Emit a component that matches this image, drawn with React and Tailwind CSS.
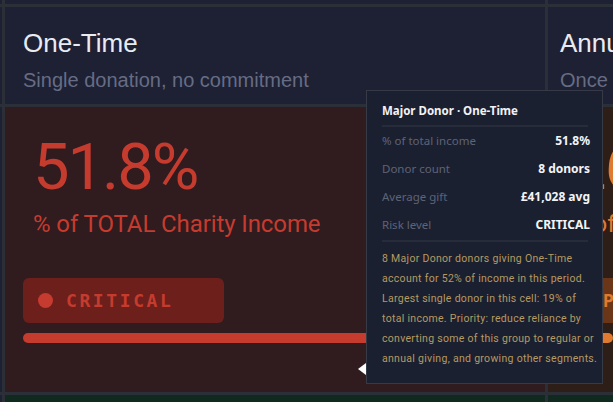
export default function App() {
    const rows = [
        { label: '% of total income', value: '51.8%' },
        { label: 'Donor count', value: '8 donors' },
        { label: 'Average gift', value: '£41,028 avg' },
        { label: 'Risk level', value: 'CRITICAL' },
    ];

    const note = [
        '8 Major Donor donors giving One-Time',
        'account for 52% of income in this period.',
        'Largest single donor in this cell: 19% of',
        'total income. Priority: reduce reliance by',
        'converting some of this group to regular or',
        'annual giving, and growing other segments.',
    ];

    return (
        <div className="relative w-[613px] h-[402px] overflow-hidden bg-[#2b2f38]">
            <div className="grid grid-cols-[2px_540px_1fr] grid-rows-[4px_97px_285px_1fr] gap-[3px] h-full">
                {/* row above (clipped) */}
                <div className="bg-[#1d2133]" />
                <div className="bg-[#1d2133]" />
                <div className="bg-[#1d2133]" />

                {/* header row */}
                <div className="bg-[#1d2133]" />
                <div className="bg-[#1d2133] px-[18px] pt-[21px] overflow-hidden whitespace-nowrap" style={{ fontFamily: '"Liberation Sans", Arial, sans-serif' }}>
                    <h3 className="text-[26px] leading-[30px] text-[#e9ebf1]">One-Time</h3>
                    <p className="text-[20px] leading-[24px] mt-[10px] text-[#676c85]">Single donation, no commitment</p>
                </div>
                <div className="bg-[#1d2133] pl-[12px] pt-[21px] overflow-hidden whitespace-nowrap" style={{ fontFamily: '"Liberation Sans", Arial, sans-serif' }}>
                    <h3 className="text-[26px] leading-[30px] text-[#e9ebf1]">Annual</h3>
                    <p className="text-[20px] leading-[24px] mt-[10px] text-[#676c85]">Once a year, recurring</p>
                </div>

                {/* major donor row */}
                <div className="bg-[#1d2133]" />
                <div className="bg-[#301b1f] px-[18px] pt-[22px] overflow-hidden whitespace-nowrap" style={{ fontFamily: 'Roboto, sans-serif' }}>
                    <div className="ml-[10px] text-[65px] leading-[76px] tracking-[-2px] text-[#c53b2e]">51.8%</div>
                    <div className="ml-[10px] mt-[4px] text-[24px] leading-[30px] tracking-[-0.1px] text-[#c53b2e]">% of TOTAL Charity Income</div>
                    <div className="mt-[39px] w-[201px] h-[45px] rounded-[6px] bg-[#6d1f1c] flex items-center pl-[15px] gap-[13px]">
                        <span className="w-[15px] h-[15px] rounded-full bg-[#c63b2f]" />
                        <span className="text-[18px] font-semibold tracking-[2.6px] text-[#c53b2e]" style={{ fontFamily: '"DejaVu Sans Mono", monospace' }}>CRITICAL</span>
                    </div>
                    <div className="mt-[10px] h-[10px] rounded-full bg-[#c53b2e]" />
                </div>
                <div className="bg-[#2d1f17] pl-[12px] pt-[22px] overflow-hidden whitespace-nowrap" style={{ fontFamily: 'Roboto, sans-serif' }}>
                    <div className="ml-[10px] text-[65px] leading-[76px] tracking-[-2px] text-[#e07a30]">26.0%</div>
                    <div className="ml-[10px] mt-[4px] text-[24px] leading-[30px] text-[#e07a30]">% of TOTAL Charity Income</div>
                    <div className="mt-[39px] w-[201px] h-[45px] rounded-[6px] bg-[#6b3517] flex items-center pl-[15px] gap-[13px]">
                        <span className="w-[15px] h-[15px] rounded-full bg-[#e07a30]" />
                        <span className="text-[18px] font-semibold tracking-[2.6px] text-[#e07a30]" style={{ fontFamily: '"DejaVu Sans Mono", monospace' }}>PRIORITY</span>
                    </div>
                    <div className="mt-[10px] h-[10px] rounded-full bg-[#e07a30]" />
                </div>

                {/* next row (clipped) */}
                <div className="bg-[#1d2133]" />
                <div className="bg-[#112a1f]" />
                <div className="bg-[#112a1f]" />
            </div>

            {/* cursor caret */}
            <div className="absolute left-[358px] top-[363px] w-0 h-0 border-y-[6px] border-y-transparent border-r-[8px] border-r-white" />

            {/* tooltip */}
            <div className="absolute left-[366px] top-[90px] w-[237px] h-[294px] bg-[#1b2030] border border-[#363a47] pl-[15px] pr-[12px] pt-[11px]" style={{ fontFamily: '"Noto Sans", "Open Sans", sans-serif' }}>
                <div className="text-[11.5px] leading-[18px] font-bold text-[#f1f2f5] pb-[5px] border-b-2 border-[#272c3b] mr-[2px]">Major Donor · One-Time</div>
                <div className="pb-[1px] border-b-2 border-[#272c3b] mr-[2px]">
                    {rows.map(r => (
                        <div key={r.label} className="flex items-center justify-between h-[28px] -mr-[2px]">
                            <span className="text-[11.5px] text-[#5e6377]">{r.label}</span>
                            <span className="text-[12px] font-bold text-[#f3f4f7]">{r.value}</span>
                        </div>
                    ))}
                </div>
                <div className="pt-[7px] text-[10.5px] leading-[20px] tracking-[0.3px] text-[#b59a62] whitespace-nowrap" style={{ fontFamily: 'Roboto, sans-serif' }}>
                    {note.map(line => (
                        <p key={line}>{line}</p>
                    ))}
                </div>
            </div>
        </div>
    );
}
